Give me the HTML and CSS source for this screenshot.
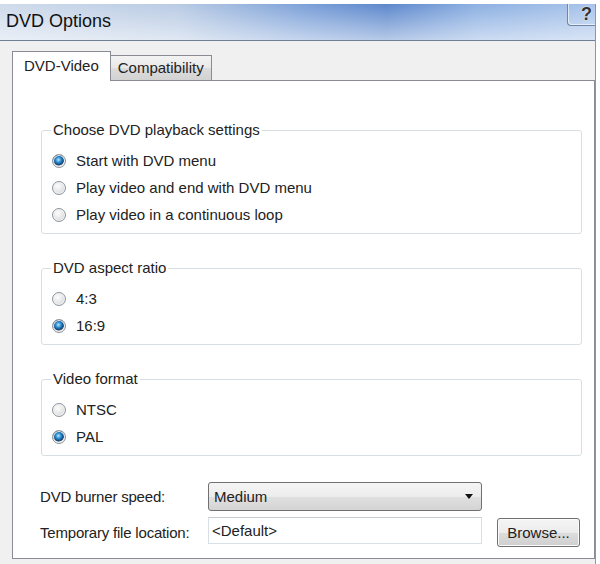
FILE: index.html
```html
<!DOCTYPE html>
<html lang="en">
<head>
    <meta charset="UTF-8">
    <title>DVD Options</title>
    <link rel="stylesheet" href="styles.css">
</head>
<body>

    <div class="window">
        <div class="titlebar">
            <span class="title">DVD Options</span>
            <span class="help">?</span>
        </div>

        <div class="dialog">
            <div class="tabs">
                <div class="tab active">DVD-Video</div>
                <div class="tab">Compatibility</div>
            </div>

            <div class="panel">
                <fieldset class="group">
                    <legend>Choose DVD playback settings</legend>
                    <div class="option"><span class="radio checked"></span>Start with DVD menu</div>
                    <div class="option"><span class="radio"></span>Play video and end with DVD menu</div>
                    <div class="option"><span class="radio"></span>Play video in a continuous loop</div>
                </fieldset>

                <fieldset class="group">
                    <legend>DVD aspect ratio</legend>
                    <div class="option"><span class="radio"></span>4:3</div>
                    <div class="option"><span class="radio checked"></span>16:9</div>
                </fieldset>

                <fieldset class="group">
                    <legend>Video format</legend>
                    <div class="option"><span class="radio"></span>NTSC</div>
                    <div class="option"><span class="radio checked"></span>PAL</div>
                </fieldset>

                <div class="form">
                    <span class="label">DVD burner speed:</span>
                    <div class="select">Medium<span class="arrow"></span></div>
                    <span></span>

                    <span class="label">Temporary file location:</span>
                    <div class="input">&lt;Default&gt;</div>
                    <div class="button">Browse...</div>
                </div>
            </div>
        </div>
    </div>

</body>
</html>
```

FILE: styles.css
```css
body {
    margin: 0;
    background: #fff;
    font-family: "Liberation Sans", Arial, sans-serif;
    font-size: 15px;
    color: #222;
}

.window {
    width: 596px;
    margin-top: 4px;
    box-sizing: border-box;
    border-right: 1px solid #8b97a6;
}

/* title bar */
.titlebar {
    display: flex;
    align-items: flex-start;
    height: 36px;
    border-bottom: 1px solid #6f7f93;
    background:
        linear-gradient(to bottom, rgba(255,255,255,0) 0%, rgba(255,255,255,0.55) 100%),
        linear-gradient(to right, #cfdbeb 0%, #b9cbe4 30%, #7a9fd8 52%, #5d88cc 65%, #8db0e2 80%, #a9c4ea 100%);
}

.title {
    font-size: 18px;
    line-height: 20px;
    padding: 7px 0 0 6px;
    color: #111;
}

.help {
    margin-left: auto;
    width: 24px;
    height: 21px;
    padding-right: 3px;
    border-left: 1px solid #6f86a8;
    border-bottom: 1px solid #6f86a8;
    border-bottom-left-radius: 4px;
    box-shadow: inset 1px -1px 0 rgba(255,255,255,0.6);
    text-align: right;
    font-weight: bold;
    font-size: 18px;
    line-height: 20px;
    color: #333;
    text-shadow: 0 0 2px #fff;
}

/* dialog body */
.dialog {
    background: #f0f0f0;
    padding: 10px 0 6px 12px;
}

.tabs {
    display: flex;
    align-items: flex-end;
    height: 29px;
}

.tab {
    position: relative;
    height: 24px;
    line-height: 24px;
    padding: 0 7px;
    border: 1px solid #898c95;
    border-bottom: none;
    border-left: none;
    background: linear-gradient(#f3f3f3, #e8e8e8 50%, #dcdcdc 51%, #d2d2d2);
}

.tab.active {
    z-index: 1;
    height: 29px;
    line-height: 28px;
    padding: 0 11px;
    margin-bottom: -1px;
    border-left: 1px solid #898c95;
    background: #fff;
}

.panel {
    height: 479px;
    box-sizing: border-box;
    border: 1px solid #898c95;
    background: #fff;
    padding: 0 12px 0 28px;
}

/* group boxes */
.group {
    margin: 25px 0 0 0;
    padding: 8px 0 5px 9px;
    border: 1px solid #d5dfe5;
    border-radius: 3px;
    min-width: 0;
}

.group:first-child {
    margin-top: 40px;
}

.group legend {
    padding: 0 2px;
    line-height: 18px;
}

.option {
    display: flex;
    align-items: center;
    height: 27px;
}

.radio {
    width: 12px;
    height: 12px;
    margin: 0 10px 0 1px;
    border: 1px solid #8c959f;
    border-radius: 50%;
    background: radial-gradient(circle at 40% 35%, #fdfdfd 0%, #e4e4e4 55%, #c4c4c4 100%);
    box-shadow: inset 0 0 0 1px #f4f4f4;
}

.radio.checked {
    background:
        radial-gradient(circle at 45% 40%, #bfe6fb 0%, #3596d6 25%, #0f4f8a 48%, #3d4f60 56%, transparent 62%),
        radial-gradient(circle at 40% 35%, #fdfdfd 0%, #e4e4e4 55%, #c4c4c4 100%);
}

/* bottom fields */
.form {
    display: grid;
    grid-template-columns: 153px 274px 83px;
    grid-template-rows: 29px 30px;
    column-gap: 15px;
    row-gap: 6px;
    margin: 26px 0 0 -1px;
}

.label {
    align-self: center;
    white-space: nowrap;
    letter-spacing: -0.2px;
}

.select {
    display: flex;
    align-items: center;
    justify-content: space-between;
    padding: 0 8px 0 5px;
    border: 1px solid #707070;
    border-radius: 3px;
    background: linear-gradient(#f5f5f5, #ececec 50%, #e0e0e0 51%, #d4d4d4);
}

.arrow {
    width: 0;
    height: 0;
    border-left: 4px solid transparent;
    border-right: 4px solid transparent;
    border-top: 5px solid #111;
}

.input {
    align-self: start;
    height: 27px;
    box-sizing: border-box;
    padding-left: 3px;
    line-height: 25px;
    border: 1px solid #d9dfe6;
    border-top-color: #c6ccd3;
    background: #fff;
}

.button {
    align-self: start;
    margin-top: 1px;
    height: 29px;
    box-sizing: border-box;
    line-height: 27px;
    text-align: center;
    border: 1px solid #707070;
    border-radius: 3px;
    background: linear-gradient(#f5f5f5, #ececec 50%, #dddddd 51%, #cfcfcf);
    box-shadow: inset 0 0 0 1px #fbfbfb;
}
```
